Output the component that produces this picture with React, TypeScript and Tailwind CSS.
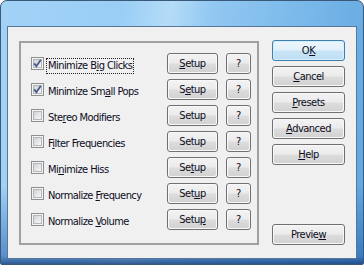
import React from "react";

const font = { fontFamily: '"DejaVu Sans Condensed", "DejaVu Sans", sans-serif' };

function U({ children }: { children: React.ReactNode }) {
  return <span className="underline underline-offset-[1px] decoration-[1px]">{children}</span>;
}

function Btn({
  children,
  w,
  def,
}: {
  children: React.ReactNode;
  w: string;
  def?: boolean;
}) {
  return (
    <div
      className={`${w} h-[21px] shrink-0 rounded-[3px] border ${
        def ? "border-[#3c7fb1]" : "border-[#707070]"
      } p-[1px] ${def ? "bg-[#d8eefa]" : "bg-[#f8f8f8]"}`}
    >
      <div
        className={`flex h-full w-full items-center justify-center rounded-[2px] text-[11px] tracking-[-0.5px] text-[#0c0c22] ${
          def
            ? "bg-[linear-gradient(to_bottom,#eaf6fd_0%,#e3f1fb_48%,#c9e5f7_52%,#bfdff5_100%)]"
            : "bg-[linear-gradient(to_bottom,#f2f2f2_0%,#ebebeb_48%,#dddddd_52%,#d2d2d2_100%)]"
        }`}
      >
        <span className="leading-none">{children}</span>
      </div>
    </div>
  );
}

function Check({ checked }: { checked: boolean }) {
  return (
    <div className="h-[13px] w-[13px] shrink-0 border border-[#8e8f8f] bg-[#f4f4f4] p-[1px] relative">
      <div className="h-full w-full border border-[#b4b7bc] bg-[linear-gradient(135deg,#cfd2d6_0%,#e8e9eb_60%,#f6f6f6_100%)]" />
      {checked && (
        <svg className="absolute left-0 top-0" width="11" height="11" viewBox="0 0 11 11">
          <path d="M2.2 5.4 L4.4 8.2 L8.8 1.8" fill="none" stroke="#4a5f8f" strokeWidth="1.9" strokeLinejoin="miter" />
        </svg>
      )}
    </div>
  );
}

const rows: { label: React.ReactNode; checked: boolean; setup: React.ReactNode; focus?: boolean }[] = [
  { label: <>Minimize B<U>i</U>g Clicks</>, checked: true, setup: <><U>S</U>etup</>, focus: true },
  { label: <>Minimize Sm<U>a</U>ll Pops</>, checked: true, setup: <>S<U>e</U>tup</> },
  { label: <>Ste<U>r</U>eo Modifiers</>, checked: false, setup: <>Setup</> },
  { label: <>F<U>i</U>lter Frequencies</>, checked: false, setup: <>Setup</> },
  { label: <>Mi<U>n</U>imize Hiss</>, checked: false, setup: <>Se<U>t</U>up</> },
  { label: <>Normalize <U>F</U>requency</>, checked: false, setup: <>Set<U>u</U>p</> },
  { label: <>Normalize <U>V</U>olume</>, checked: false, setup: <>Setu<U>p</U></> },
];

export default function App() {
  return (
    <div style={font} className="h-[265px] w-[364px] overflow-hidden">
      <div className="flex h-[265px] w-[364px] flex-col rounded-t-[7px] rounded-b-[2px] border border-[#3a5877] bg-[linear-gradient(to_bottom,rgba(255,255,255,0)_0%,rgba(255,255,255,0)_70%,rgba(30,90,170,0.55)_97%,rgba(20,60,120,0.8)_100%),linear-gradient(100deg,#a2d2f6_0%,#9acef5_30%,#b4dcf8_42%,#92c8f1_52%,#76b6e9_78%,#5fa5df_100%)] pt-[25px] pr-[6px] pb-[5px] pl-[6px]">
        <div className="flex h-[233px] w-[350px] items-start border border-[#56779a] bg-[#f0f0f0] pt-[14px] pr-[11px] pl-[11px]">
          <div className="flex h-[204px] w-[240px] shrink-0 flex-col gap-[5px] border-2 border-[#a0a0a0] pt-[10px] pr-[6px] pl-[10px]">
            {rows.map((r, i) => (
              <div key={i} className="flex h-[21px] items-center">
                <Check checked={r.checked} />
                <div className="ml-[2px] flex-1">
                  <span
                    className={`inline-block px-[1px] text-[11px] leading-[14px] tracking-[-0.55px] text-[#0c0c22] border ${
                      r.focus ? "border-dotted border-[#222]" : "border-transparent"
                    }`}
                  >
                    {r.label}
                  </span>
                </div>
                <Btn w="w-[51px]">{r.setup}</Btn>
                <div className="w-[8px] shrink-0" />
                <Btn w="w-[25px]">?</Btn>
              </div>
            ))}
          </div>
          <div className="ml-[13px] -mt-[1px] flex h-[205px] w-[73px] shrink-0 flex-col gap-[5px]">
            <Btn w="w-[73px]" def>
              O<U>K</U>
            </Btn>
            <Btn w="w-[73px]">
              <U>C</U>ancel
            </Btn>
            <Btn w="w-[73px]">
              <U>P</U>resets
            </Btn>
            <Btn w="w-[73px]">
              <U>A</U>dvanced
            </Btn>
            <Btn w="w-[73px]">
              <U>H</U>elp
            </Btn>
            <div className="mt-auto">
              <Btn w="w-[73px]">
                Previe<U>w</U>
              </Btn>
            </div>
          </div>
        </div>
      </div>
    </div>
  );
}
